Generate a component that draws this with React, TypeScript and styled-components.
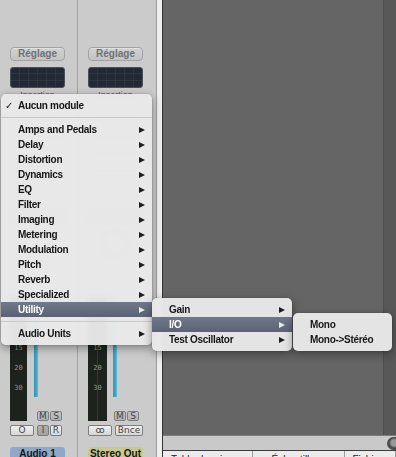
import React from "react";
import styled, { createGlobalStyle } from "styled-components";

const GlobalStyle = createGlobalStyle`
  html, body {
    margin: 0;
    padding: 0;
    background: #cacaca;
  }
  body {
    font-family: "Liberation Sans", Arial, sans-serif;
  }
  * {
    box-sizing: border-box;
  }
`;

const Screen = styled.div`
  position: relative;
  display: flex;
  width: 396px;
  height: 457px;
  overflow: hidden;
`;

/* ---------- mixer strips ---------- */

const Mixer = styled.div`
  display: flex;
  width: 157px;
  height: 100%;
  background: #cbcbcb;
  border-right: 1px solid #9d9d9d;
`;

const Strip = styled.div<{ $divider?: boolean }>`
  display: flex;
  flex-direction: column;
  flex: none;
  width: 78px;
  height: 460px;
  padding: 47px 0 0 10px;
  border-right: ${(p) => (p.$divider ? "1px solid #a4a4a4" : "none")};
`;

const SettingButton = styled.div`
  width: 55px;
  height: 14px;
  border: 1px solid #a3a3a3;
  border-radius: 4px;
  background: linear-gradient(#d2d2d2, #c3c3c3);
  box-shadow: inset 0 1px 0 rgba(255, 255, 255, 0.35);
  color: #707070;
  font: bold 10px/12px "Liberation Sans", Arial, sans-serif;
  text-align: center;
`;

const PluginDisplay = styled.div`
  width: 55px;
  height: 21px;
  margin-top: 6px;
  border: 1px solid #4a4f58;
  border-radius: 3px;
  background-color: #232a36;
  background-image: repeating-linear-gradient(
      90deg,
      transparent 0 8px,
      rgba(255, 255, 255, 0.05) 8px 9px
    ),
    repeating-linear-gradient(
      0deg,
      transparent 0 6px,
      rgba(255, 255, 255, 0.05) 6px 7px
    );
`;

const Caption = styled.div`
  width: 55px;
  height: 11px;
  margin-top: 2px;
  color: #555;
  font: 9px/11px "Liberation Sans", Arial, sans-serif;
  text-align: center;
`;

const Slot = styled.div<{ $dim?: boolean }>`
  width: 55px;
  height: 13px;
  margin-top: ${(p) => (p.$dim ? 24 : 4)}px;
  border: 1px solid #a9a9a9;
  border-radius: 3px;
  background: ${(p) => (p.$dim ? "#bdbdbd" : "#d9d9d9")};
`;

const PanKnob = styled.div`
  width: 26px;
  height: 26px;
  margin: 8px 0 0 14px;
  border: 2px solid #a5a5a5;
  border-radius: 50%;
  background: radial-gradient(circle at 40% 35%, #e2e2e2, #b9b9b9);
`;

const FaderSection = styled.div`
  display: flex;
  flex: 1;
  min-height: 0;
  margin-top: 40px;
`;

const Meter = styled.div<{ $stereo?: boolean }>`
  display: flex;
  flex-direction: column;
  justify-content: flex-end;
  align-items: center;
  width: ${(p) => (p.$stereo ? 19 : 17)}px;
  padding-bottom: 23px;
  background: ${(p) =>
    p.$stereo
      ? "linear-gradient(90deg, #1e221d 0 9px, #33382f 9px 10px, #1e221d 10px)"
      : "#1e221d"};
`;

const ScaleMark = styled.span`
  height: 20px;
  color: #8e938b;
  font: 7px/20px "DejaVu Sans Mono", monospace;
`;

const FaderColumn = styled.div`
  display: flex;
  flex-direction: column;
  flex: 1;
`;

const LevelBar = styled.div<{ $offset: number }>`
  flex: 1;
  width: 4px;
  margin: 0 0 14px ${(p) => p.$offset}px;
  background: linear-gradient(90deg, #2f93b3, #4cbad8);
`;

const ButtonPair = styled.div<{ $offset?: number }>`
  display: flex;
  gap: 1px;
  margin-left: ${(p) => p.$offset ?? 0}px;
`;

const TinyButton = styled.div<{ $width?: number; $tone?: "plain" | "dark" | "pressed" }>`
  width: ${(p) => p.$width ?? 12}px;
  height: ${(p) => (p.$tone === "dark" ? 10 : 11)}px;
  border: 1px solid #7d7d7d;
  border-radius: 2px;
  background: ${(p) =>
    p.$tone === "dark"
      ? "linear-gradient(#c4c4c4, #b2b2b2)"
      : p.$tone === "pressed"
      ? "linear-gradient(#b0b0b0, #a0a0a0)"
      : "linear-gradient(#f0f0f0, #d6d6d6)"};
  color: #444;
  font: 9px/9px "DejaVu Sans", sans-serif;
  text-align: center;
`;

const ButtonRow = styled.div`
  display: flex;
  gap: 3px;
  margin-top: 4px;
`;

const TrackLabel = styled.div<{ $color: string }>`
  width: 55px;
  height: 13px;
  margin-top: 11px;
  border-radius: 3px 3px 0 0;
  background: ${(p) => p.$color};
  color: #161616;
  font: bold 10px/13px "Liberation Sans", Arial, sans-serif;
  text-align: center;
`;

/* ---------- arrange side ---------- */

const Splitter = styled.div`
  flex: none;
  width: 6px;
  height: 100%;
  background: #efefef;
  border-right: 1px solid #333;
`;

const Arrange = styled.div`
  display: flex;
  flex-direction: column;
  flex: 1;
`;

const Canvas = styled.div`
  display: flex;
  justify-content: flex-end;
  height: 435px;
  background: #656565;
`;

const ScrollTrack = styled.div`
  width: 13px;
  background: #585858;
  border-left: 1px solid #4f4f4f;
`;

const HScroll = styled.div`
  display: flex;
  justify-content: flex-end;
  align-items: center;
  height: 15px;
  border-top: 1px solid #7c7c7c;
  background: #c9c9c9;
`;

const ZoomKnob = styled.div`
  width: 9px;
  height: 13px;
  border-radius: 7px 0 0 7px;
  background: radial-gradient(circle at 80% 45%, #9a9a9a 0 3px, #4c4c4c 5px);
`;

const TabBar = styled.div`
  display: flex;
  height: 7px;
  border-top: 1px solid #3b3b3b;
  background: #ececec;
  overflow: hidden;
`;

const Tab = styled.div<{ $width?: number }>`
  flex: ${(p) => (p.$width ? "none" : 1)};
  width: ${(p) => (p.$width ? `${p.$width}px` : "auto")};
  padding-top: 2px;
  border-right: 1px solid #9a9a9a;
  color: #222;
  font: 10px/13px "Liberation Sans", Arial, sans-serif;
  text-align: center;
  white-space: nowrap;
  overflow: hidden;
`;

/* ---------- pop-up menus ---------- */

const MenuPanel = styled.div<{ $left: number; $top: number; $width: number }>`
  position: absolute;
  left: ${(p) => p.$left}px;
  top: ${(p) => p.$top}px;
  width: ${(p) => p.$width}px;
  padding: 4px 0;
  border-radius: 5px;
  background: rgba(232, 232, 232, 0.97);
  backdrop-filter: blur(2px);
  box-shadow: 0 3px 10px rgba(0, 0, 0, 0.38), 0 0 0 1px rgba(0, 0, 0, 0.06);
`;

const MenuItem = styled.div<{ $active?: boolean }>`
  display: flex;
  align-items: center;
  height: 15px;
  padding-left: 17px;
  color: ${(p) => (p.$active ? "#fff" : "#161616")};
  background: ${(p) =>
    p.$active ? "linear-gradient(#717889, #5b6274)" : "transparent"};
  font: bold 10px/15px "Liberation Sans", Arial, sans-serif;
  letter-spacing: -0.3px;
  white-space: nowrap;
`;

const Check = styled.span`
  width: 13px;
  margin-left: -13px;
  font: bold 10px/15px "DejaVu Sans", sans-serif;
`;

const Arrow = styled.span<{ $active?: boolean }>`
  width: 0;
  height: 0;
  margin: 0 7px 0 auto;
  border-top: 3.5px solid transparent;
  border-bottom: 3.5px solid transparent;
  border-left: 6px solid ${(p) => (p.$active ? "#e8e8e8" : "#1e1e1e")};
`;

const Separator = styled.div`
  height: 9px;
  display: flex;
  align-items: center;
  &::after {
    content: "";
    flex: 1;
    height: 1px;
    background: #c9c9c9;
  }
`;

const categories = [
  "Amps and Pedals",
  "Delay",
  "Distortion",
  "Dynamics",
  "EQ",
  "Filter",
  "Imaging",
  "Metering",
  "Modulation",
  "Pitch",
  "Reverb",
  "Specialized",
];

type StripProps = {
  name: string;
  color: string;
  stereo?: boolean;
  divider?: boolean;
};

const ChannelStrip: React.FC<StripProps> = ({ name, color, stereo, divider }) => (
  <Strip $divider={divider}>
    <SettingButton>Réglage</SettingButton>
    <PluginDisplay />
    <Caption>Insertion</Caption>
    <Slot />
    <Slot />
    <Slot />
    <Slot />
    <Slot />
    <Slot $dim />
    <PanKnob />
    <FaderSection>
      <Meter $stereo={stereo}>
        <ScaleMark>15</ScaleMark>
        <ScaleMark>20</ScaleMark>
        <ScaleMark>30</ScaleMark>
      </Meter>
      <FaderColumn>
        <LevelBar $offset={stereo ? 6 : 7} />
        <ButtonPair $offset={stereo ? 7 : 10}>
          <TinyButton $tone="dark">M</TinyButton>
          <TinyButton $tone="dark">S</TinyButton>
        </ButtonPair>
      </FaderColumn>
    </FaderSection>
    <ButtonRow>
      {stereo ? (
        <>
          <TinyButton $width={24}>ꝏ</TinyButton>
          <TinyButton $width={28}>Bnce</TinyButton>
        </>
      ) : (
        <>
          <TinyButton $width={24}>O</TinyButton>
          <ButtonPair>
            <TinyButton $tone="pressed">I</TinyButton>
            <TinyButton>R</TinyButton>
          </ButtonPair>
        </>
      )}
    </ButtonRow>
    <TrackLabel $color={color}>{name}</TrackLabel>
  </Strip>
);

const App: React.FC = () => (
  <>
    <GlobalStyle />
    <Screen>
      <Mixer>
        <ChannelStrip name="Audio 1" color="#8fa8c8" divider />
        <ChannelStrip name="Stereo Out" color="#c8c98d" stereo />
      </Mixer>
      <Splitter />
      <Arrange>
        <Canvas>
          <ScrollTrack />
        </Canvas>
        <HScroll>
          <ZoomKnob />
        </HScroll>
        <TabBar>
          <Tab $width={90}>Table de mixage</Tab>
          <Tab $width={92}>Échantillons</Tab>
          <Tab>Fichiers</Tab>
        </TabBar>
      </Arrange>

      <MenuPanel $left={1} $top={94} $width={151}>
        <MenuItem>
          <Check>✓</Check>Aucun module
        </MenuItem>
        <Separator />
        {categories.map((c) => (
          <MenuItem key={c}>
            {c}
            <Arrow />
          </MenuItem>
        ))}
        <MenuItem $active>
          Utility
          <Arrow $active />
        </MenuItem>
        <Separator />
        <MenuItem>
          Audio Units
          <Arrow />
        </MenuItem>
      </MenuPanel>

      <MenuPanel $left={152} $top={298} $width={140}>
        <MenuItem>
          Gain
          <Arrow />
        </MenuItem>
        <MenuItem $active>
          I/O
          <Arrow $active />
        </MenuItem>
        <MenuItem>
          Test Oscillator
          <Arrow />
        </MenuItem>
      </MenuPanel>

      <MenuPanel $left={293} $top={313} $width={99}>
        <MenuItem>Mono</MenuItem>
        <MenuItem>Mono-&gt;Stéréo</MenuItem>
      </MenuPanel>
    </Screen>
  </>
);

export default App;
